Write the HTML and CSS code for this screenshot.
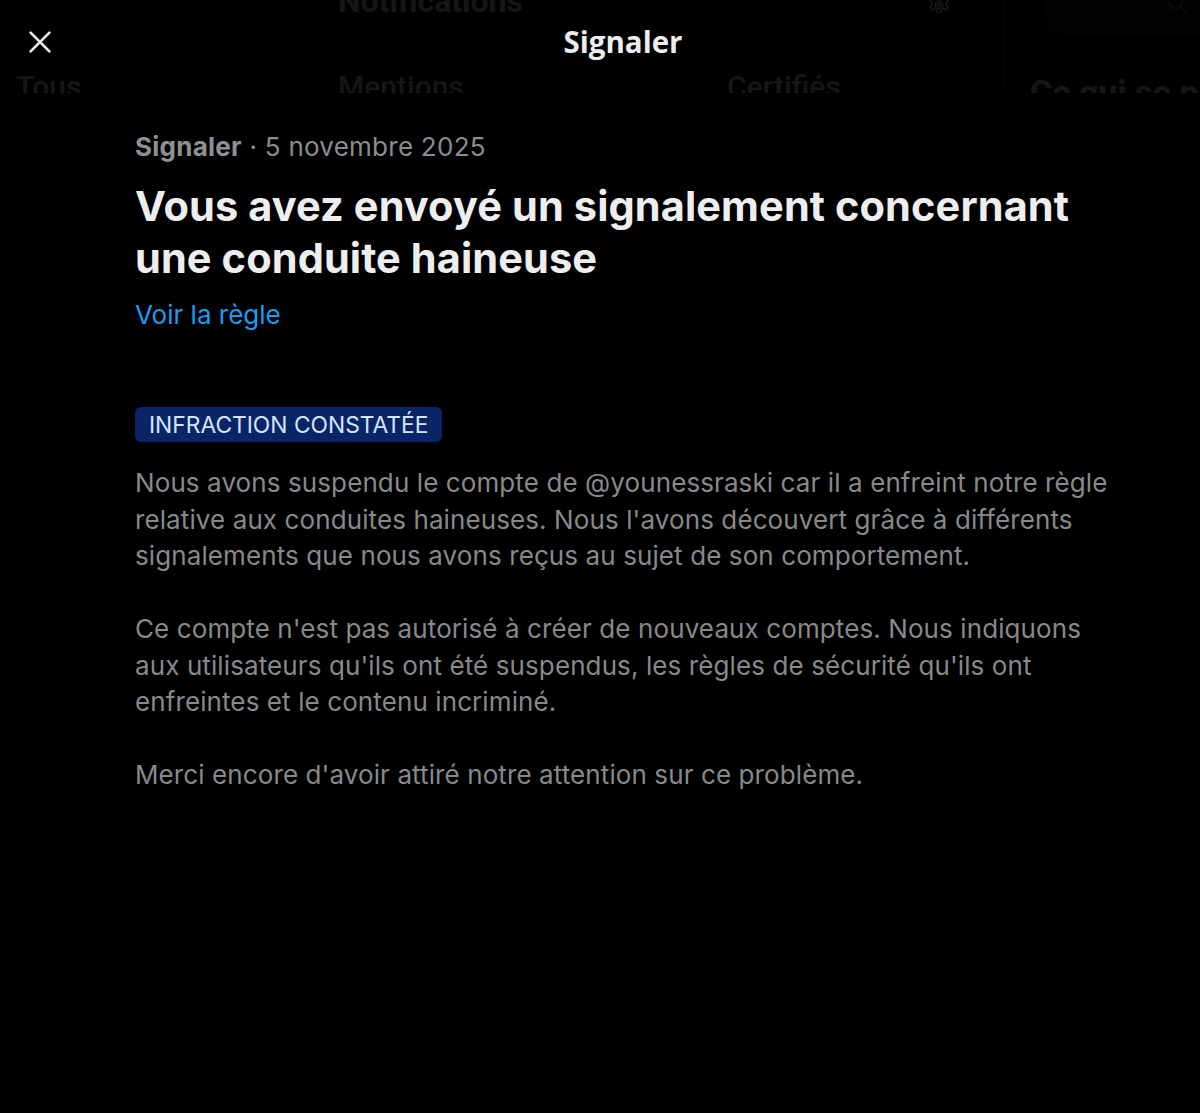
FILE: index.html
```html
<!DOCTYPE html>
<html lang="fr">
<head>
<meta charset="utf-8">
<title>Signaler</title>
<link rel="stylesheet" href="styles.css">
</head>
<body>
<div class="app">
  <div class="main-col">
    <div class="main-head">
      <span class="main-title">Notifications</span>
      <svg class="gear" viewBox="0 0 24 24" width="26" height="26"><path d="M12 8.5a3.5 3.5 0 1 0 0 7 3.5 3.5 0 0 0 0-7zm0 5a1.5 1.5 0 1 1 0-3 1.5 1.5 0 0 1 0 3zM10.2 2h3.6l.6 2.6 1.6.9 2.5-.8 1.8 3.1-1.9 1.8v1.8l1.9 1.8-1.8 3.1-2.5-.8-1.6.9-.6 2.6h-3.6l-.6-2.6-1.6-.9-2.5.8-1.8-3.1 1.9-1.8v-1.8L3.7 7.8l1.8-3.1 2.5.8 1.6-.9z" fill="none" stroke="currentColor" stroke-width="1.6"/></svg>
    </div>
    <nav class="tabs">
      <span class="tab tab-1">Tous</span>
      <span class="tab tab-2">Mentions</span>
      <span class="tab tab-3">Certifiés</span>
    </nav>
  </div>
  <aside class="side-col">
    <div class="search">
      <svg class="search-icon" viewBox="0 0 24 24" width="26" height="26"><circle cx="10.5" cy="10.5" r="6.5" fill="none" stroke="currentColor" stroke-width="2"/><path d="M15.5 15.5L21 21" stroke="currentColor" stroke-width="2"/></svg>
    </div>
    <div class="trend-title">Ce qui se passe</div>
  </aside>
</div>

<div class="modal">
  <header class="modal-head">
    <button class="close" aria-label="Fermer">
      <svg viewBox="0 0 24 24" width="30" height="30"><path d="M4.5 4.5l15 15M19.5 4.5l-15 15" stroke="currentColor" stroke-width="2.2" stroke-linecap="round"/></svg>
    </button>
    <h1 class="modal-title">Signaler</h1>
    <span class="head-spacer"></span>
  </header>
  <main class="modal-body">
    <p class="meta"><strong>Signaler</strong> · 5 novembre 2025</p>
    <h2 class="headline">Vous avez envoyé un signalement concernant une conduite haineuse</h2>
    <a class="rule-link" href="#">Voir la règle</a>
    <span class="badge">INFRACTION CONSTATÉE</span>
    <div class="text">
      <p>Nous avons suspendu le compte de @younessraski car il a enfreint notre règle relative aux conduites haineuses. Nous l'avons découvert grâce à différents signalements que nous avons reçus au sujet de son comportement.</p>
      <p>Ce compte n'est pas autorisé à créer de nouveaux comptes. Nous indiquons aux utilisateurs qu'ils ont été suspendus, les règles de sécurité qu'ils ont enfreintes et le contenu incriminé.</p>
      <p>Merci encore d'avoir attiré notre attention sur ce problème.</p>
    </div>
  </main>
</div>
</body>
</html>
```

FILE: styles.css
```css
* { box-sizing: border-box; }
html, body {
  margin: 0;
  padding: 0;
  background: #000;
  width: 1200px;
  height: 1113px;
  overflow: hidden;
}
body {
  position: relative;
  font-family: Inter, Roboto, "Liberation Sans", sans-serif;
  color: #e7e9ea;
}

/* underlying page */
.app {
  display: flex;
  height: 1113px;
  color: #d9d9d9;
}
.main-col {
  width: 1005px;
  flex-shrink: 0;
  border-right: 1px solid #2f3336;
  font-family: Roboto, sans-serif;
}
.main-head {
  display: flex;
  align-items: center;
  height: 40px;
  margin-top: -19px;
  padding-left: 338px;
}
.main-title {
  font-size: 32px;
  font-weight: 700;
  flex: 1;
}
.gear {
  margin-right: 52px;
  margin-top: 8px;
}
.tabs {
  display: flex;
  padding-top: 48px;
  font-size: 30px;
  font-weight: 500;
}
.tab-1 { margin-left: 16px; width: 322px; }
.tab-2 { width: 389px; }
.side-col {
  flex: 1;
  min-width: 0;
  overflow: hidden;
  padding-left: 40px;
  font-family: Roboto, sans-serif;
}
.search {
  height: 36px;
  border-radius: 0 0 0 22px;
  background: #16181c;
  display: flex;
  justify-content: flex-end;
  align-items: flex-start;
  padding-right: 10px;
  color: #71767b;
}
.search-icon { margin-top: -10px; }
.trend-title {
  margin-top: 36px;
  margin-left: -15px;
  font-size: 34px;
  font-weight: 800;
  white-space: nowrap;
}

/* modal layer */
.modal {
  position: absolute;
  inset: 0;
  display: flex;
  flex-direction: column;
}
.modal-head {
  height: 93px;
  display: flex;
  align-items: center;
  background: rgba(0, 0, 0, 0.9);
  padding-bottom: 10px;
}
.close {
  width: 78px;
  height: 50px;
  border: 0;
  background: transparent;
  color: #e7e9ea;
  display: flex;
  align-items: center;
  justify-content: center;
  padding: 0 0 0 2px;
}
.modal-title {
  flex: 1;
  margin: 0;
  text-align: center;
  font-family: "Open Sans", Lato, sans-serif;
  font-size: 29.5px;
  font-weight: 700;
  color: #ededed;
}
.head-spacer { width: 32px; }

.modal-body {
  flex: 1;
  background: #000;
  padding: 36px 80px 0 135px;
  display: flex;
  flex-direction: column;
  align-items: flex-start;
}
.meta {
  margin: 0;
  font-size: 26px;
  line-height: 36px;
  letter-spacing: 0.25px;
  color: #8a8d90;
}
.meta strong { font-weight: 700; color: #8e9194; }
.headline {
  margin: 15px 0 0;
  font-size: 41.5px;
  line-height: 52px;
  font-weight: 700;
  letter-spacing: 0.1px;
  color: #eeeeee;
  max-width: 980px;
}
.rule-link {
  margin-top: 13px;
  font-size: 26px;
  line-height: 36px;
  color: #1d9bf0;
  text-decoration: none;
}
.badge {
  margin-top: 74px;
  height: 35px;
  padding: 0 14px;
  display: flex;
  align-items: center;
  background: #0a2566;
  color: #d3e5ff;
  border-radius: 6px;
  font-size: 22.8px;
}
.text {
  margin-top: 23px;
  font-size: 26px;
  line-height: 36.5px;
  letter-spacing: 0.1px;
  color: #87898b;
  max-width: 980px;
}
.text p { margin: 0 0 36.5px; }
```
